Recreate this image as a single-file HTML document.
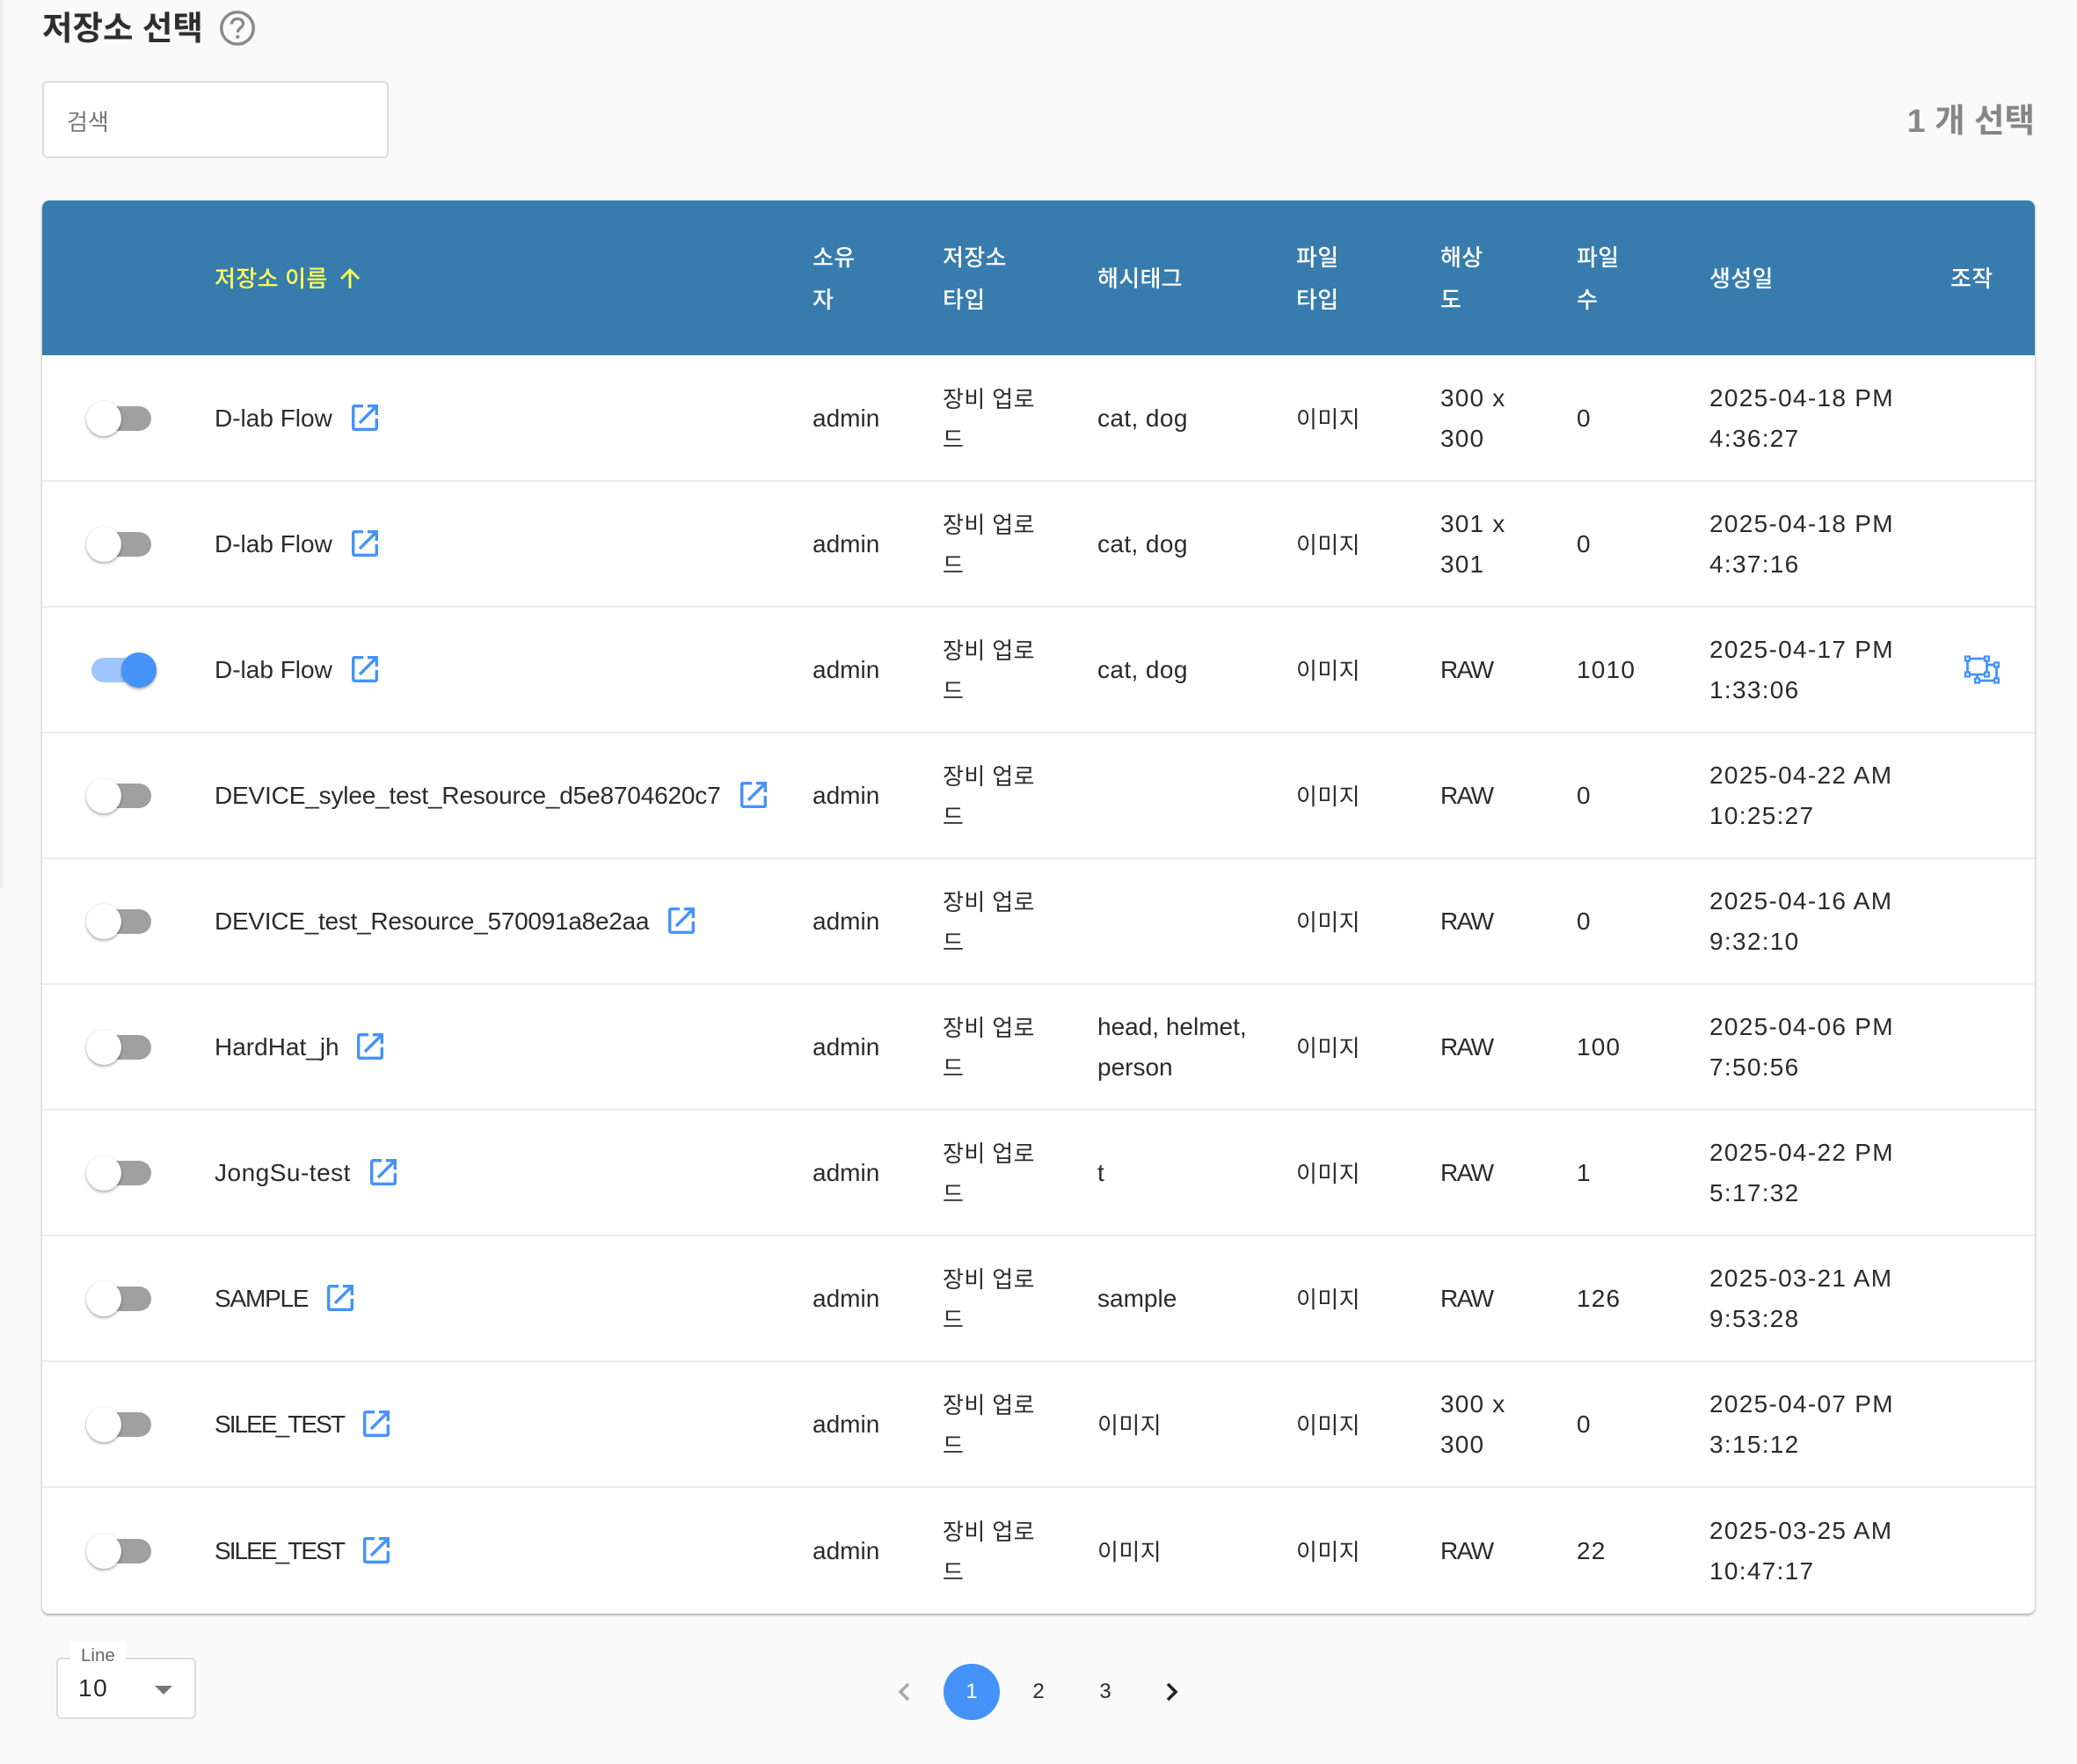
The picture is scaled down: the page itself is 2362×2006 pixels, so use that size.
<!DOCTYPE html>
<html lang="ko"><head><meta charset="utf-8"><title>저장소 선택</title>
<style>
*{box-sizing:border-box}
html,body{margin:0;padding:0;width:2362px;height:2006px;overflow:hidden;background:#fafafa;font-family:"Liberation Sans","Noto Sans CJK KR",sans-serif;color:#2b2b2b}
.abs{position:absolute}
#side{left:0;top:0;width:3px;height:1010px;background:#eeeeee}
h1{position:absolute;left:48px;top:8px;margin:0;font-size:37.5px;line-height:48px;font-weight:700;color:#2e2e2e;white-space:nowrap}
#search{left:48px;top:92px;width:394px;height:88px;background:#fff;border:2px solid #dcdcdc;border-radius:6px}
#search span{position:absolute;left:26px;top:26px;font-size:26px;line-height:38px;color:#777}
#cnt{right:48px;top:112px;font-size:37.5px;line-height:50px;font-weight:700;color:#868686;white-space:nowrap}
#wrap{left:48px;top:228px;width:2266px;height:1607px;border-radius:8px;background:#fff;box-shadow:0 2px 3px rgba(0,0,0,.28),0 0 2px rgba(0,0,0,.12)}
table{width:2266px;table-layout:fixed;border-collapse:separate;border-spacing:0}
th{background:#387cae;color:#fff;font-size:26px;font-weight:500;line-height:48px;height:176px;padding:2px 0 0;text-align:left;vertical-align:middle;letter-spacing:.3px;white-space:nowrap}
th:first-child{border-top-left-radius:8px}th:last-child{border-top-right-radius:8px}
th.s{color:#ffff55}
th svg{vertical-align:-3px;margin-left:13px}
td{padding:1px 0 0;font-size:28px;line-height:45.6px;border-bottom:2px solid #eeeeee;white-space:nowrap;vertical-align:middle;color:#2b2b2b}
tr:first-child td{padding-top:2px}
tr:last-child td{border-bottom:0;padding-bottom:1px}
td.k,tr:first-child td.k{font-size:26px;letter-spacing:.4px;padding-top:5px}
.n{letter-spacing:1.2px}
.d{letter-spacing:1.3px}
.r{letter-spacing:-1.6px}
.t{letter-spacing:.4px}
.tg{position:relative;display:block;width:100px;height:40px;margin-left:50px}
.tg i{position:absolute;left:6px;top:6px;width:68px;height:28px;border-radius:14px;background:#a0a0a0}
.tg b{position:absolute;left:0;top:0;width:40px;height:40px;border-radius:50%;background:#fff;box-shadow:0 2px 3px rgba(0,0,0,.3),0 0 2px rgba(0,0,0,.12)}
.on i{background:#9fc6fc}.on b{left:40px;background:#4593f9}
.ex{display:inline-block;width:30px;height:30px;margin-left:22px;vertical-align:-5px;letter-spacing:0}
#sel{left:64px;top:1885px;width:159px;height:70px;background:#fff;border:2px solid #dcdcdc;border-radius:6px}
#lab{left:80px;top:1867px;width:63px;height:25px;background:#fff;font-size:20.5px;line-height:32px;color:#666;padding-left:12px}
#val{left:89px;top:1900px;font-size:28px;line-height:40px;letter-spacing:1.5px}
#car{left:176px;top:1917px;width:0;height:0;border-left:10px solid transparent;border-right:10px solid transparent;border-top:10px solid #777}
.pg{top:1892px;width:64px;height:64px;line-height:64px;text-align:center;font-size:24px;color:#2b2b2b}
#p1{left:1073px;background:#4593f9;color:#fff;border-radius:50%}
</style></head><body>
<div class="abs" id="side"></div>
<h1>저장소 선택</h1>
<svg class="abs" style="left:250px;top:12px" width="40" height="40" viewBox="0 0 40 40"><circle cx="20" cy="20" r="18.2" fill="none" stroke="#888" stroke-width="3.4"/><path d="M13.5 15.5c0-3.8 3-6.2 6.6-6.2 3.700 0 6.400 2.300 6.400 5.600 0 4.800-6.200 4.900-6.200 10" fill="none" stroke="#888" stroke-width="3.2"/><circle cx="20.3" cy="30" r="2.1" fill="#888"/></svg>
<div class="abs" id="search"><span>검색</span></div>
<div class="abs" id="cnt">1 개 선택</div>
<div class="abs" id="wrap">
<table>
<colgroup><col style="width:196px"><col style="width:680px"><col style="width:148px"><col style="width:176px"><col style="width:226px"><col style="width:164px"><col style="width:155px"><col style="width:151px"><col style="width:274px"><col style="width:96px"></colgroup>
<thead><tr>
<th></th>
<th class="s">저장소 이름<svg width="24" height="24" viewBox="0 0 24 24"><path d="M12 23V2M2 12 12 2l10 10" fill="none" stroke="#ffff55" stroke-width="2.8"/></svg></th>
<th>소유<br>자</th><th>저장소<br>타입</th><th>해시태그</th><th>파일<br>타입</th><th>해상<br>도</th><th>파일<br>수</th><th>생성일</th><th>조작</th>
</tr></thead>
<tbody>
<tr style="height:144px"><td><span class="tg"><i></i><b></b></span></td><td>D-lab Flow<svg class="ex" viewBox="0 0 30 30"><path d="M13 1.700H3A1.300 1.300 0 0 0 1.700 3v24A1.300 1.300 0 0 0 3 28.300h24a1.300 1.300 0 0 0 1.300-1.300V16M18 1.700h10.300V12M28 2 9 21" fill="none" stroke="#4593f9" stroke-width="3.400"/></svg></td><td>admin</td><td class="k">장비 업로<br>드</td><td class="t">cat, dog</td><td class="k">이미지</td><td class="n">300 x<br>300</td><td class="n">0</td><td class="d">2025-04-18 PM<br>4:36:27</td><td></td></tr>
<tr style="height:143px"><td><span class="tg"><i></i><b></b></span></td><td>D-lab Flow<svg class="ex" viewBox="0 0 30 30"><path d="M13 1.700H3A1.300 1.300 0 0 0 1.700 3v24A1.300 1.300 0 0 0 3 28.300h24a1.300 1.300 0 0 0 1.300-1.300V16M18 1.700h10.300V12M28 2 9 21" fill="none" stroke="#4593f9" stroke-width="3.400"/></svg></td><td>admin</td><td class="k">장비 업로<br>드</td><td class="t">cat, dog</td><td class="k">이미지</td><td class="n">301 x<br>301</td><td class="n">0</td><td class="d">2025-04-18 PM<br>4:37:16</td><td></td></tr>
<tr style="height:143px"><td><span class="tg on"><i></i><b></b></span></td><td>D-lab Flow<svg class="ex" viewBox="0 0 30 30"><path d="M13 1.700H3A1.300 1.300 0 0 0 1.700 3v24A1.300 1.300 0 0 0 3 28.300h24a1.300 1.300 0 0 0 1.300-1.300V16M18 1.700h10.300V12M28 2 9 21" fill="none" stroke="#4593f9" stroke-width="3.400"/></svg></td><td>admin</td><td class="k">장비 업로<br>드</td><td class="t">cat, dog</td><td class="k">이미지</td><td class="r">RAW</td><td class="n">1010</td><td class="d">2025-04-17 PM<br>1:33:06</td><td><svg style="display:block;margin-left:15px" width="42" height="34" viewBox="0 0 42 34" fill="none" stroke="#4593f9"><path d="M4.500 4H26.500V22H4.500ZM26.500 11H37.500V29H15.500V22" stroke-width="2.800"/><g fill="#dcebff" stroke-width="2.200"><rect x="2" y="1.500" width="5" height="5"/><rect x="24" y="1.500" width="5" height="5"/><rect x="2" y="19.500" width="5" height="5"/><rect x="24" y="19.500" width="5" height="5"/><rect x="35" y="8.500" width="5" height="5"/><rect x="35" y="26.500" width="5" height="5"/><rect x="13" y="26.500" width="5" height="5"/></g></svg></td></tr>
<tr style="height:143px"><td><span class="tg"><i></i><b></b></span></td><td style="letter-spacing:-.17px">DEVICE_sylee_test_Resource_d5e8704620c7<svg class="ex" viewBox="0 0 30 30"><path d="M13 1.700H3A1.300 1.300 0 0 0 1.700 3v24A1.300 1.300 0 0 0 3 28.300h24a1.300 1.300 0 0 0 1.300-1.300V16M18 1.700h10.300V12M28 2 9 21" fill="none" stroke="#4593f9" stroke-width="3.400"/></svg></td><td>admin</td><td class="k">장비 업로<br>드</td><td></td><td class="k">이미지</td><td class="r">RAW</td><td class="n">0</td><td class="d">2025-04-22 AM<br>10:25:27</td><td></td></tr>
<tr style="height:143px"><td><span class="tg"><i></i><b></b></span></td><td style="letter-spacing:-.26px">DEVICE_test_Resource_570091a8e2aa<svg class="ex" viewBox="0 0 30 30"><path d="M13 1.700H3A1.300 1.300 0 0 0 1.700 3v24A1.300 1.300 0 0 0 3 28.300h24a1.300 1.300 0 0 0 1.300-1.300V16M18 1.700h10.300V12M28 2 9 21" fill="none" stroke="#4593f9" stroke-width="3.400"/></svg></td><td>admin</td><td class="k">장비 업로<br>드</td><td></td><td class="k">이미지</td><td class="r">RAW</td><td class="n">0</td><td class="d">2025-04-16 AM<br>9:32:10</td><td></td></tr>
<tr style="height:143px"><td><span class="tg"><i></i><b></b></span></td><td>HardHat_jh<svg class="ex" style="margin-left:20px" viewBox="0 0 30 30"><path d="M13 1.700H3A1.300 1.300 0 0 0 1.700 3v24A1.300 1.300 0 0 0 3 28.300h24a1.300 1.300 0 0 0 1.300-1.300V16M18 1.700h10.300V12M28 2 9 21" fill="none" stroke="#4593f9" stroke-width="3.400"/></svg></td><td>admin</td><td class="k">장비 업로<br>드</td><td>head, helmet,<br>person</td><td class="k">이미지</td><td class="r">RAW</td><td class="n">100</td><td class="d">2025-04-06 PM<br>7:50:56</td><td></td></tr>
<tr style="height:143px"><td><span class="tg"><i></i><b></b></span></td><td style="letter-spacing:.5px">JongSu-test<svg class="ex" viewBox="0 0 30 30"><path d="M13 1.700H3A1.300 1.300 0 0 0 1.700 3v24A1.300 1.300 0 0 0 3 28.300h24a1.300 1.300 0 0 0 1.300-1.300V16M18 1.700h10.300V12M28 2 9 21" fill="none" stroke="#4593f9" stroke-width="3.400"/></svg></td><td>admin</td><td class="k">장비 업로<br>드</td><td>t</td><td class="k">이미지</td><td class="r">RAW</td><td class="n">1</td><td class="d">2025-04-22 PM<br>5:17:32</td><td></td></tr>
<tr style="height:143px"><td><span class="tg"><i></i><b></b></span></td><td style="letter-spacing:-1.2px">SAMPLE<svg class="ex" viewBox="0 0 30 30"><path d="M13 1.700H3A1.300 1.300 0 0 0 1.700 3v24A1.300 1.300 0 0 0 3 28.300h24a1.300 1.300 0 0 0 1.300-1.300V16M18 1.700h10.300V12M28 2 9 21" fill="none" stroke="#4593f9" stroke-width="3.400"/></svg></td><td>admin</td><td class="k">장비 업로<br>드</td><td>sample</td><td class="k">이미지</td><td class="r">RAW</td><td class="n">126</td><td class="d">2025-03-21 AM<br>9:53:28</td><td></td></tr>
<tr style="height:143px"><td><span class="tg"><i></i><b></b></span></td><td style="letter-spacing:-1.95px">SILEE_TEST<svg class="ex" viewBox="0 0 30 30"><path d="M13 1.700H3A1.300 1.300 0 0 0 1.700 3v24A1.300 1.300 0 0 0 3 28.300h24a1.300 1.300 0 0 0 1.300-1.300V16M18 1.700h10.300V12M28 2 9 21" fill="none" stroke="#4593f9" stroke-width="3.400"/></svg></td><td>admin</td><td class="k">장비 업로<br>드</td><td class="k">이미지</td><td class="k">이미지</td><td class="n">300 x<br>300</td><td class="n">0</td><td class="d">2025-04-07 PM<br>3:15:12</td><td></td></tr>
<tr style="height:143px"><td><span class="tg"><i></i><b></b></span></td><td style="letter-spacing:-1.95px">SILEE_TEST<svg class="ex" viewBox="0 0 30 30"><path d="M13 1.700H3A1.300 1.300 0 0 0 1.700 3v24A1.300 1.300 0 0 0 3 28.300h24a1.300 1.300 0 0 0 1.300-1.300V16M18 1.700h10.300V12M28 2 9 21" fill="none" stroke="#4593f9" stroke-width="3.400"/></svg></td><td>admin</td><td class="k">장비 업로<br>드</td><td class="k">이미지</td><td class="k">이미지</td><td class="r">RAW</td><td class="n">22</td><td class="d">2025-03-25 AM<br>10:47:17</td><td></td></tr>
</tbody></table>
</div>
<div class="abs" id="sel"></div>
<div class="abs" id="lab">Line</div>
<div class="abs" id="val">10</div>
<div class="abs" id="car"></div>
<svg class="abs" style="left:1020px;top:1912px" width="16" height="24" viewBox="0 0 16 24"><path d="M13 3 4 12l9 9" fill="none" stroke="#aaa" stroke-width="3.600"/></svg>
<div class="abs pg" id="p1">1</div>
<div class="abs pg" style="left:1149px">2</div>
<div class="abs pg" style="left:1225px">3</div>
<svg class="abs" style="left:1325px;top:1912px" width="16" height="24" viewBox="0 0 16 24"><path d="M3 3l9 9-9 9" fill="none" stroke="#222" stroke-width="3.600"/></svg>
</body></html>
